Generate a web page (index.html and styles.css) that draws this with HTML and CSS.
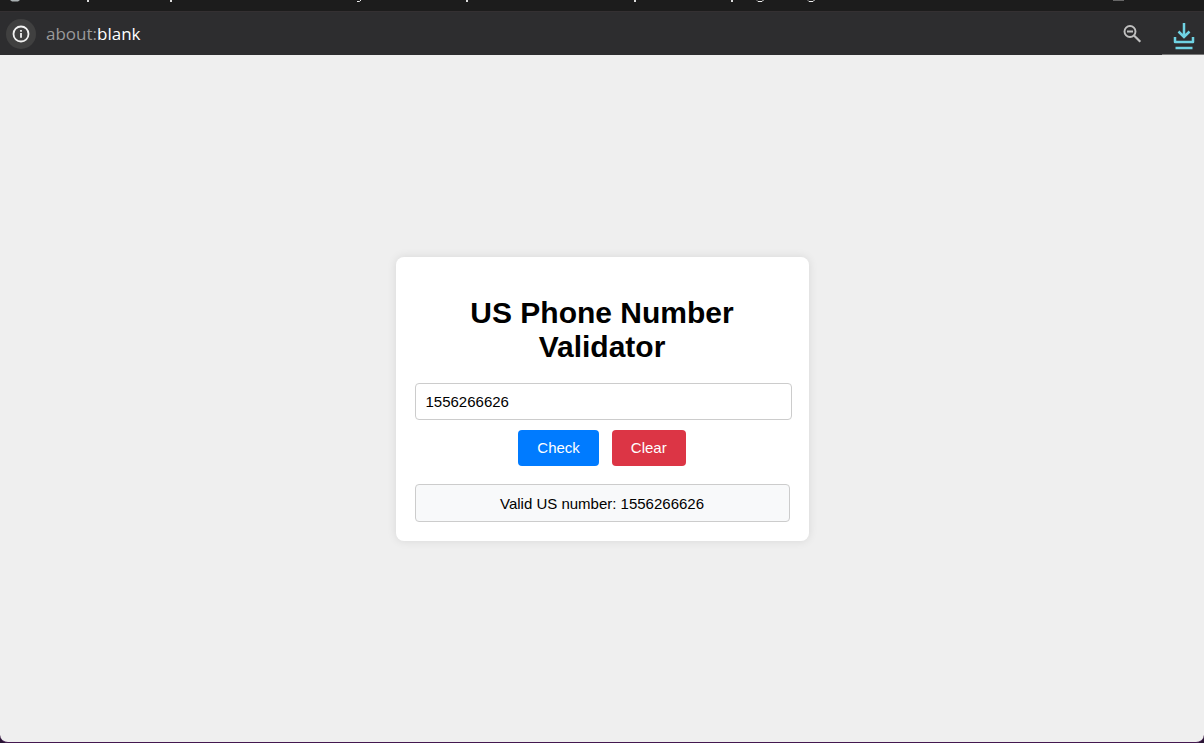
FILE: index.html
```html
<!DOCTYPE html>
<html lang="en">
<head>
<meta charset="utf-8">
<meta name="viewport" content="width=device-width, initial-scale=1">
<title>US Phone Number Validator</title>
<link rel="stylesheet" href="styles.css">
</head>
<body>
<div class="window">
  <header class="chrome">
    <div class="titlebar">
      <svg class="title-remains" width="1204" height="3" viewBox="0 0 1204 3" aria-hidden="true">
        <path d="M10 0h10l-2 1.500h-6z" fill="#a9b0b2"/>
        <path d="M87 0h2v2h-2zM170 0h2v2h-2zM466 0h2v2h-2zM634 0h2v2h-2zM731 0h2v2h-2z" fill="#dcdcdc"/>
        <path d="M357 1.500h2.500l1.500-1.500M757 .5l1 1h4l1.500-1.500M808 .5l1 1h4l1.500-1.500" fill="none" stroke="#eee"/>
        <path d="M1113 0h11v1h-11z" fill="#666"/>
      </svg>
    </div>
    <div class="toolbar">
      <button class="info" type="button" aria-label="Site information">
        <svg width="18" height="18" viewBox="0 0 18 18" fill="none" stroke="#f2f2f2" stroke-width="1.800">
          <circle cx="9" cy="9" r="7.500"/>
          <path d="M9 8v4.800M9 5v1.800"/>
        </svg>
      </button>
      <div class="address"><span class="scheme">about:</span>blank</div>
      <button class="tool zoom" type="button" aria-label="Zoom out">
        <svg width="20" height="20" viewBox="0 0 20 20" fill="none" stroke="#c0c0c0">
          <circle cx="8" cy="7.500" r="5.500" stroke-width="1.900"/>
          <path d="M5 7.500h6" stroke-width="2"/>
          <path d="M12 11.500l6.300 6.200" stroke-width="2.200"/>
        </svg>
      </button>
      <button class="tool download" type="button" aria-label="Downloads">
        <svg width="22" height="28" viewBox="0 0 22 28" fill="none" stroke="#6fd3e3" stroke-width="2.500">
          <path d="M11 1v14M5.500 9.500l5.500 5.500 5.500-5.500"/>
          <path d="M2 15v5h18v-5" stroke-linejoin="round"/>
          <path d="M2.500 26h17"/>
        </svg>
      </button>
    </div>
  </header>
  <main class="page">
    <section class="card">
      <h1 class="heading">US Phone Number Validator</h1>
      <form class="form">
        <input class="number" type="text" aria-label="Phone number" value="1556266626">
        <div class="actions">
          <button class="btn check" type="button">Check</button>
          <button class="btn clear" type="button">Clear</button>
        </div>
        <output class="result">Valid US number: 1556266626</output>
      </form>
    </section>
  </main>
</div>
</body>
</html>
```
FILE: styles.css
```css
* { box-sizing: border-box; }

body {
  margin: 0;
  background: #2a1535;
  font-family: Arial, "Liberation Sans", sans-serif;
}

button {
  border: 0;
  padding: 0;
  font: inherit;
}

.window {
  display: flex;
  flex-direction: column;
  min-height: 100vh;
  background: #efefef;
  border-bottom: 1px solid #43184f;
  border-radius: 0 0 8px 8px;
  overflow: hidden;
}

.titlebar {
  height: 11px;
  background: #1c1c1c;
  overflow: hidden;
}

.title-remains { display: block; }

.toolbar {
  display: flex;
  align-items: center;
  height: 44px;
  padding-left: 6px;
  background: #2d2d2f;
  border-top: 1px solid #343032;
}

.info {
  display: grid;
  place-items: center;
  width: 30px;
  height: 30px;
  border-radius: 50%;
  background: #404040;
}

.address {
  flex: 1;
  padding-left: 10px;
  color: #fff;
  font: 17px/24px "Segoe UI", "Open Sans", "Noto Sans", sans-serif;
}

.scheme { color: #9a9a9a; }

.tool {
  display: grid;
  place-items: center;
  height: 100%;
  background: transparent;
}

.zoom {
  width: 42px;
  margin-right: 9px;
}

.download {
  width: 42px;
  padding: 5px 0 0 2px;
  border-bottom: 1px solid #777;
}

.page {
  flex: 1;
  display: flex;
  align-items: center;
  justify-content: center;
}

.card {
  width: 100%;
  max-width: 413px;
  padding: 19px;
  background: #fff;
  border-radius: 8px;
  box-shadow: 0 0 10px rgba(0, 0, 0, 0.1);
  text-align: center;
}

.heading {
  margin: 20px 0 19px;
  font-size: 30px;
  line-height: 34px;
}

.form {
  display: flex;
  flex-direction: column;
}

.number {
  width: calc(100% + 2px);
  height: 37px;
  padding: 0 10px;
  border: 1px solid #ccc;
  border-radius: 4px;
  background: #fff;
  color: #000;
  font: inherit;
  font-size: 15px;
}

.actions {
  display: flex;
  justify-content: center;
  gap: 13px;
  margin: 10px 0 18px;
}

.btn {
  height: 36px;
  padding: 0 19px;
  border-radius: 4px;
  color: #fff;
  font-size: 15px;
}

.check { background: #007bff; }

.clear { background: #dc3545; }

.result {
  display: block;
  padding: 10px 9px 8px;
  border: 1px solid #ccc;
  border-radius: 4px;
  background: #f8f9fa;
  font-size: 15px;
  line-height: 18px;
}
```
